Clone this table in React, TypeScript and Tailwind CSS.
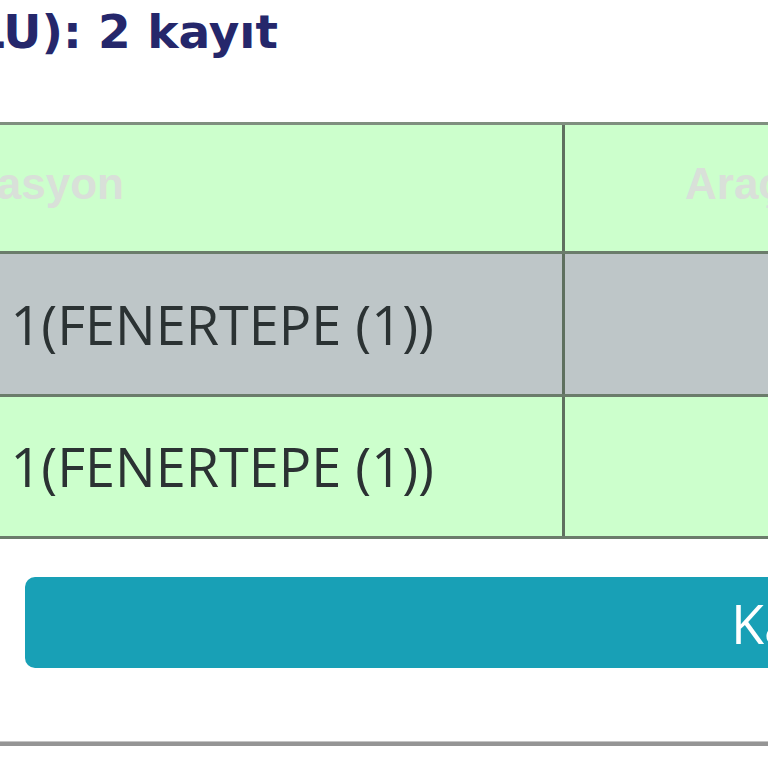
export default function App() {
  return (
    <div className="w-[768px] h-[768px] overflow-hidden bg-white font-['Open_Sans',sans-serif]">
      {/* Title */}
      <div className="h-[122px] pt-[2px] whitespace-nowrap overflow-hidden">
        <h2 className="ml-[-25px] text-[47px] font-bold leading-[60px] text-[#25276b] font-['DejaVu_Sans',Verdana,sans-serif]">
          LU): 2 kayıt
        </h2>
      </div>

      {/* Table */}
      <div className="w-[900px] border-t-[3px] border-[#7f8f7f]">
        <div className="flex h-[129px] bg-[#ccffcc] border-b-[3px] border-[#6b7c6b]">
          <div className="w-[565px] shrink-0 flex items-center justify-end pr-[438px] pb-[8px] border-r-[3px] border-[#5f705f] overflow-hidden whitespace-nowrap">
            <span className="text-[44px] font-bold text-[#d9e0d9] font-['Liberation_Sans',Arial,sans-serif]">Lokasyon</span>
          </div>
          <div className="flex-1 flex items-center pl-[120px] pb-[8px] whitespace-nowrap overflow-hidden">
            <span className="text-[44px] font-bold text-[#d9e0d9] font-['Liberation_Sans',Arial,sans-serif]">Araç</span>
          </div>
        </div>
        <div className="flex h-[143px] bg-[#bec6c8] border-b-[3px] border-[#6b7c6b]">
          <div className="w-[565px] shrink-0 flex items-center justify-end pr-[128px] border-r-[3px] border-[#5f705f] overflow-hidden whitespace-nowrap">
            <span className="text-[54px] text-[#2b3233]">FENERTEPE 1(FENERTEPE (1))</span>
          </div>
          <div className="flex-1" />
        </div>
        <div className="flex h-[142px] bg-[#ccffcc] border-b-[3px] border-[#6b7c6b]">
          <div className="w-[565px] shrink-0 flex items-center justify-end pr-[128px] border-r-[3px] border-[#5f705f] overflow-hidden whitespace-nowrap">
            <span className="text-[54px] text-[#2b3233]">FENERTEPE 1(FENERTEPE (1))</span>
          </div>
          <div className="flex-1" />
        </div>
      </div>

      {/* Button */}
      <div className="mt-[38px] ml-[25px] w-[900px]">
        <button className="w-full h-[91px] rounded-[10px] bg-[#18a0b6] text-white text-[54px] text-left pl-[706px] whitespace-nowrap overflow-hidden leading-none">
          Kaydet
        </button>
      </div>

      {/* Bottom rule */}
      <div className="mt-[73px] h-[5px] bg-[#959595] border-t border-[#c4c4c4]" />
    </div>
  );
}
